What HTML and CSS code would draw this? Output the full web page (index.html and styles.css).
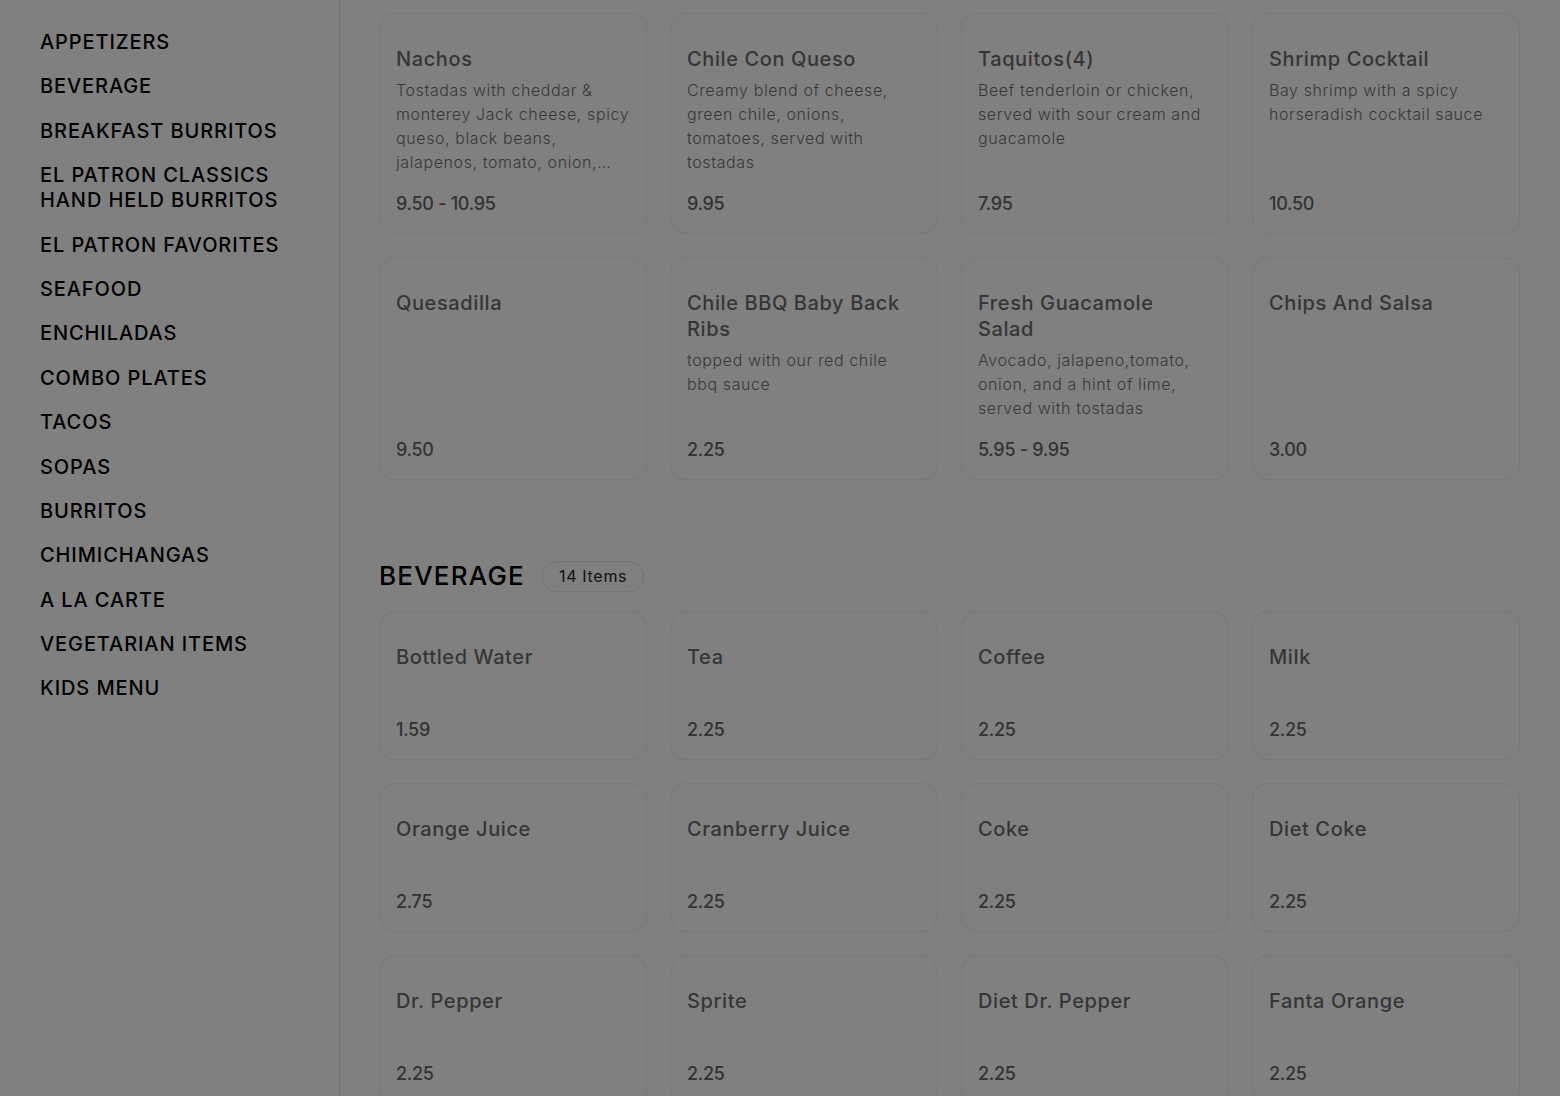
FILE: index.html
```html
<!DOCTYPE html>
<html lang="en">
<head>
<meta charset="utf-8">
<title>Menu</title>
<link rel="stylesheet" href="styles.css">
</head>
<body>
<div class="layout">
  <aside class="sidebar">
    <nav class="nav">
      <a class="nav-item">APPETIZERS</a>
      <a class="nav-item">BEVERAGE</a>
      <a class="nav-item">BREAKFAST BURRITOS</a>
      <a class="nav-item">EL PATRON CLASSICS<br>HAND HELD BURRITOS</a>
      <a class="nav-item">EL PATRON FAVORITES</a>
      <a class="nav-item">SEAFOOD</a>
      <a class="nav-item">ENCHILADAS</a>
      <a class="nav-item">COMBO PLATES</a>
      <a class="nav-item">TACOS</a>
      <a class="nav-item">SOPAS</a>
      <a class="nav-item">BURRITOS</a>
      <a class="nav-item">CHIMICHANGAS</a>
      <a class="nav-item">A LA CARTE</a>
      <a class="nav-item">VEGETARIAN ITEMS</a>
      <a class="nav-item">KIDS MENU</a>
    </nav>
  </aside>
  <main class="main">
    <section class="section">
      <div class="grid">
        <div class="card"><h3 class="card-title">Nachos</h3><p class="card-desc">Tostadas with cheddar &amp; monterey Jack cheese, spicy queso, black beans, jalapenos, tomato, onion, sour cream and guacamole</p><div class="card-price">9.50 - 10.95</div></div>
        <div class="card"><h3 class="card-title">Chile Con Queso</h3><p class="card-desc">Creamy blend of cheese, green chile, onions, tomatoes, served with tostadas</p><div class="card-price">9.95</div></div>
        <div class="card"><h3 class="card-title">Taquitos(4)</h3><p class="card-desc">Beef tenderloin or chicken, served with sour cream and guacamole</p><div class="card-price">7.95</div></div>
        <div class="card"><h3 class="card-title">Shrimp Cocktail</h3><p class="card-desc">Bay shrimp with a spicy horseradish cocktail sauce</p><div class="card-price">10.50</div></div>
        <div class="card"><h3 class="card-title">Quesadilla</h3><p class="card-desc"></p><div class="card-price">9.50</div></div>
        <div class="card"><h3 class="card-title">Chile BBQ Baby Back Ribs</h3><p class="card-desc">topped with our red chile bbq sauce</p><div class="card-price">2.25</div></div>
        <div class="card"><h3 class="card-title">Fresh Guacamole Salad</h3><p class="card-desc">Avocado, jalapeno,tomato, onion, and a hint of lime, served with tostadas</p><div class="card-price">5.95 - 9.95</div></div>
        <div class="card"><h3 class="card-title">Chips And Salsa</h3><p class="card-desc"></p><div class="card-price">3.00</div></div>
      </div>
    </section>
    <section class="section">
      <div class="section-head">
        <h2 class="section-title">BEVERAGE</h2>
        <span class="badge">14 Items</span>
      </div>
      <div class="grid">
        <div class="card"><h3 class="card-title">Bottled Water</h3><p class="card-desc"></p><div class="card-price">1.59</div></div>
        <div class="card"><h3 class="card-title">Tea</h3><p class="card-desc"></p><div class="card-price">2.25</div></div>
        <div class="card"><h3 class="card-title">Coffee</h3><p class="card-desc"></p><div class="card-price">2.25</div></div>
        <div class="card"><h3 class="card-title">Milk</h3><p class="card-desc"></p><div class="card-price">2.25</div></div>
        <div class="card"><h3 class="card-title">Orange Juice</h3><p class="card-desc"></p><div class="card-price">2.75</div></div>
        <div class="card"><h3 class="card-title">Cranberry Juice</h3><p class="card-desc"></p><div class="card-price">2.25</div></div>
        <div class="card"><h3 class="card-title">Coke</h3><p class="card-desc"></p><div class="card-price">2.25</div></div>
        <div class="card"><h3 class="card-title">Diet Coke</h3><p class="card-desc"></p><div class="card-price">2.25</div></div>
        <div class="card"><h3 class="card-title">Dr. Pepper</h3><p class="card-desc"></p><div class="card-price">2.25</div></div>
        <div class="card"><h3 class="card-title">Sprite</h3><p class="card-desc"></p><div class="card-price">2.25</div></div>
        <div class="card"><h3 class="card-title">Diet Dr. Pepper</h3><p class="card-desc"></p><div class="card-price">2.25</div></div>
        <div class="card"><h3 class="card-title">Fanta Orange</h3><p class="card-desc"></p><div class="card-price">2.25</div></div>
      </div>
    </section>
  </main>
</div>
</body>
</html>
```
FILE: styles.css
```css
* { box-sizing: border-box; }
html, body { margin: 0; padding: 0; }
body {
  background: #808080;
  font-family: "Inter", "Noto Sans", "DejaVu Sans", sans-serif;
  height: 1096px;
  overflow: hidden;
}
.layout {
  display: flex;
  height: 1096px;
}
.sidebar {
  width: 340px;
  flex: 0 0 340px;
  border-right: 1px solid #737373;
  padding: 30px 0 0 40px;
}
.nav {
  display: flex;
  flex-direction: column;
  gap: 19.4px;
}
.nav-item {
  display: block;
  color: #000;
  font-size: 20px;
  font-weight: 500;
  line-height: 25px;
  letter-spacing: 0.9px;
}
.main {
  flex: 1;
  padding: 13px 40px 0 39px;
  overflow: hidden;
}
.section { margin-bottom: 80px; }
.section-head {
  display: flex;
  align-items: center;
  gap: 17px;
  height: 32px;
  margin-bottom: 19px;
}
.section-title {
  margin: 0;
  font-size: 26px;
  font-weight: 500;
  color: #000;
  line-height: 32px;
  letter-spacing: 1.2px;
}
.badge {
  display: inline-flex;
  align-items: center;
  height: 31px;
  padding: 0 16px;
  border: 1px solid #747474;
  border-radius: 16px;
  font-size: 16px;
  letter-spacing: 0.7px;
  color: #111;
}
.grid {
  display: grid;
  grid-template-columns: repeat(4, 1fr);
  column-gap: 23px;
  row-gap: 23px;
}
.card {
  display: flex;
  flex-direction: column;
  border: 1px solid #787878;
  border-radius: 16px;
  padding: 32px 16px 17px;
}
.card-title {
  margin: 0;
  font-size: 20px;
  font-weight: 500;
  line-height: 26px;
  letter-spacing: 0.6px;
  color: #363636;
}
.card-desc {
  margin: 6px 0 0;
  min-height: 24px;
  font-size: 16px;
  font-weight: 300;
  line-height: 24px;
  letter-spacing: 0.6px;
  color: #383838;
  display: -webkit-box;
  -webkit-line-clamp: 4;
  -webkit-box-orient: vertical;
  overflow: hidden;
}
.card-price {
  margin-top: auto;
  padding-top: 18px;
  font-size: 18px;
  font-weight: 500;
  line-height: 24px;
  letter-spacing: -0.3px;
  color: #333;
}
```
